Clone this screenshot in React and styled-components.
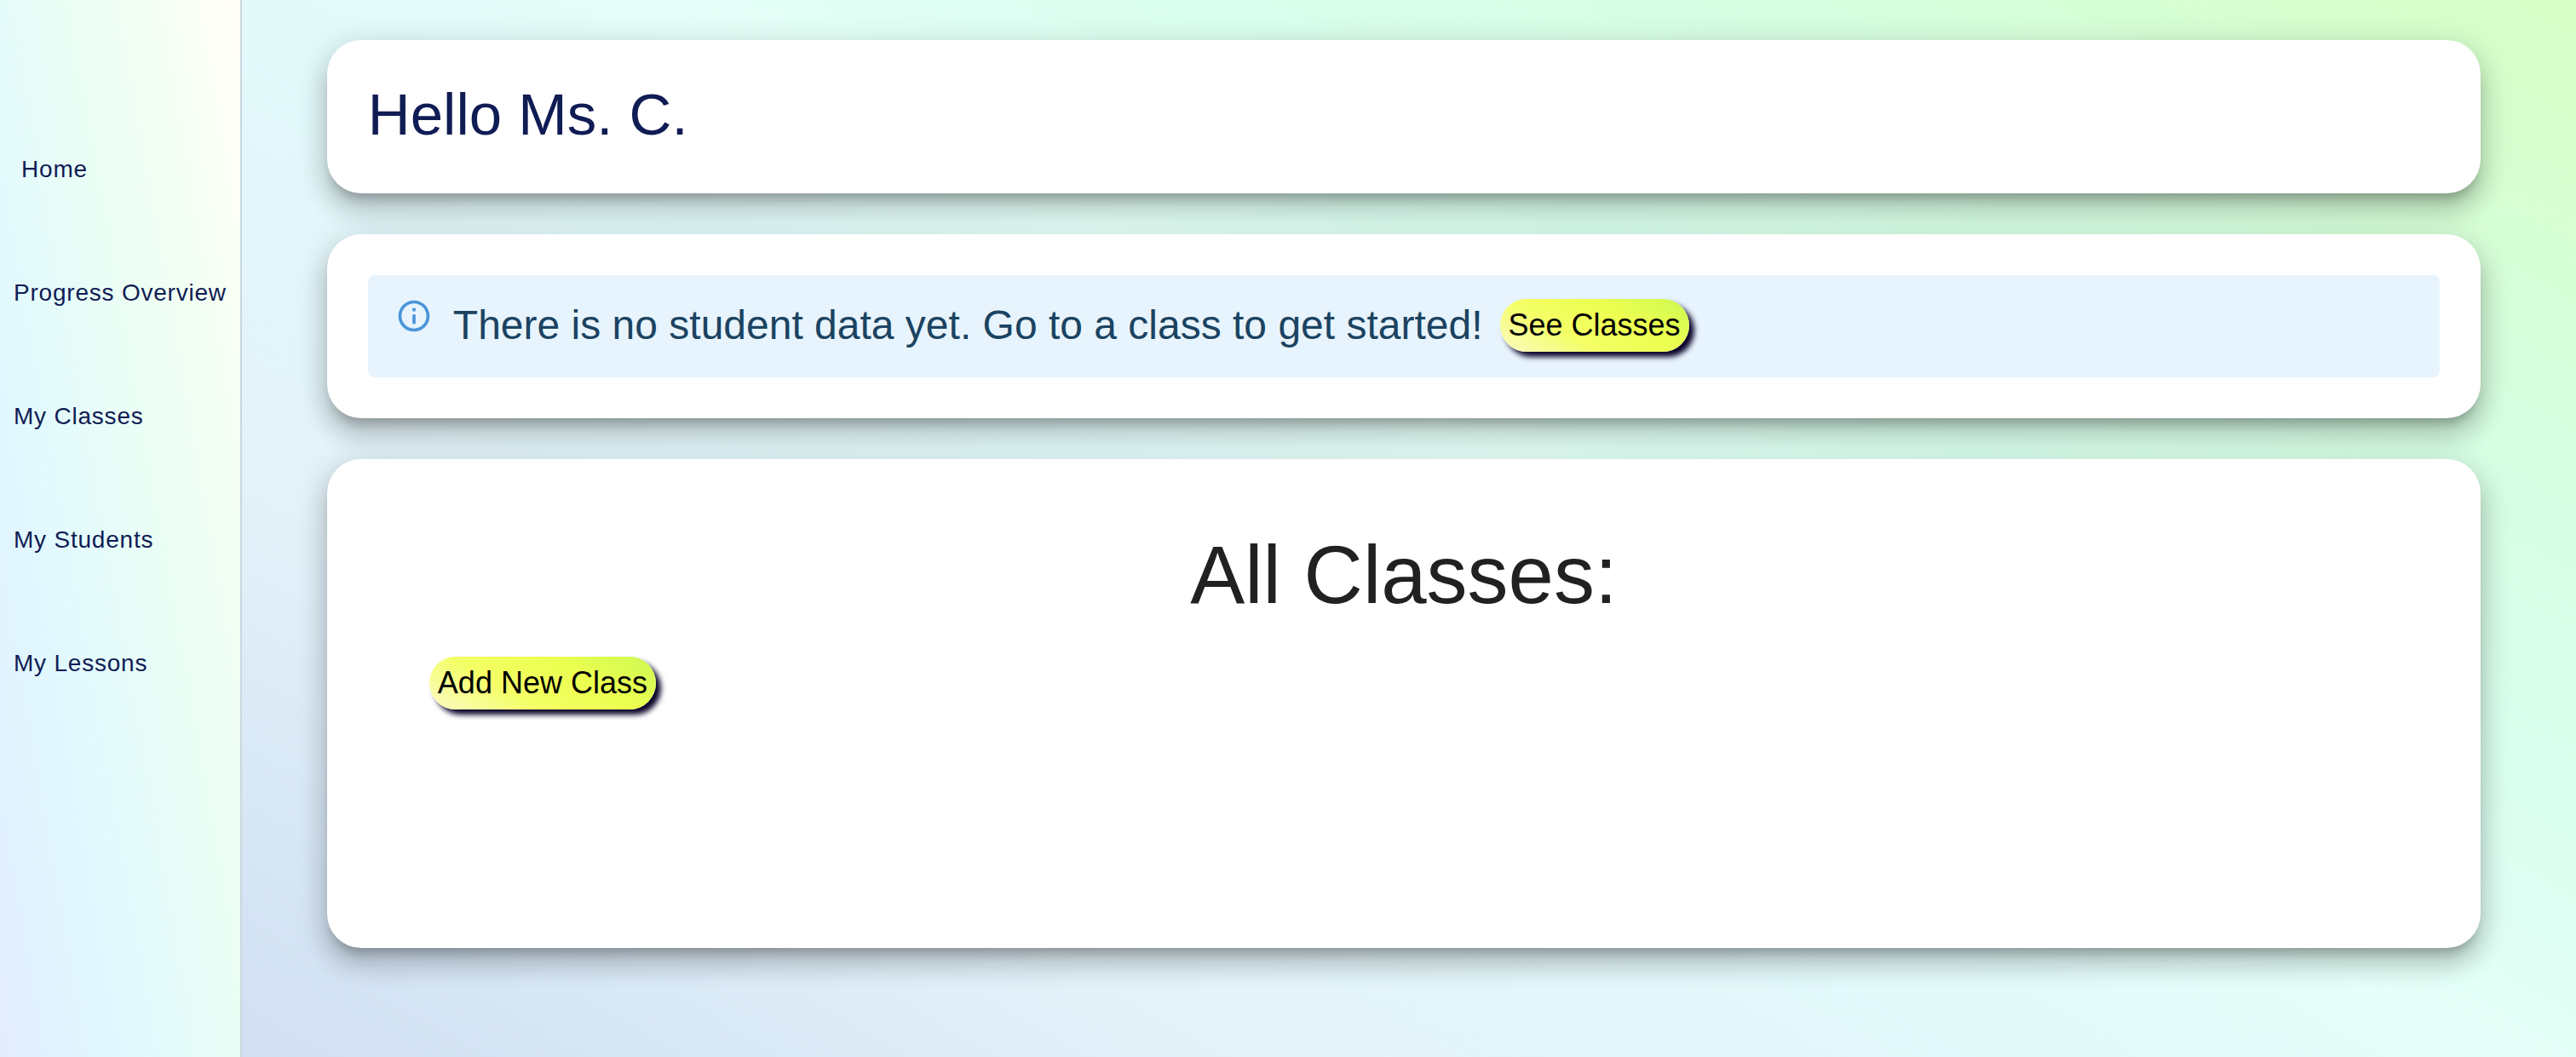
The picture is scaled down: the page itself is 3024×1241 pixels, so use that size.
import React from "react";
import styled, { createGlobalStyle } from "styled-components";

const GlobalStyle = createGlobalStyle`
  *, *::before, *::after { box-sizing: border-box; }
  body {
    margin: 0;
    font-family: "Liberation Sans", Helvetica, Arial, sans-serif;
    color: #212121;
  }
`;

const Page = styled.div`
  display: flex;
  min-height: 100vh;
`;

const Sidebar = styled.nav`
  flex: none;
  padding-top: 162px;
  border-right: 2px solid #c8d7de;
  background: linear-gradient(
    80deg,
    #e3ecfe,
    #e0f3ff 16%,
    #e2f9fe 33%,
    #e6fcfa 45%,
    #eafef5 58%,
    #f3fff3 78%,
    #fffff7 96%
  );
`;

const NavList = styled.ul`
  display: flex;
  flex-direction: column;
  align-items: flex-start;
  gap: 72px;
  margin: 0;
  padding: 0;
  list-style: none;
`;

const NavLink = styled.a`
  display: block;
  min-width: 128px;
  padding: 12px 16px;
  color: #101c54;
  font-size: 28px;
  line-height: 49px;
  letter-spacing: 0.028em;
  text-align: center;
  text-decoration: none;
  white-space: nowrap;
`;

const Main = styled.main`
  flex: 1;
  display: flex;
  flex-direction: column;
  gap: 48px;
  padding: 47px 112px 48px 100px;
  background: linear-gradient(
    30deg,
    #d1dff2,
    #d6e6f5 9%,
    #e3f2f9 24%,
    #e3fafb 45%,
    #e5fff8 55%,
    #daffef 66%,
    #d6fee2 80%,
    #d6ffcd 94%,
    #d8ffc6
  );
`;

const Card = styled.section`
  padding: 48px;
  border-radius: 40px;
  background: #fff;
  box-shadow:
    0 12px 12px -6px rgba(0, 0, 0, 0.2),
    0 20px 28px 2px rgba(0, 0, 0, 0.14),
    0 8px 36px 6px rgba(0, 0, 0, 0.12);
`;

const ClassesCard = styled(Card)`
  min-height: 574px;
  padding: 80px 120px;
`;

const Greeting = styled.h1`
  margin: 0 0 4px;
  color: #101c54;
  font-size: 69px;
  font-weight: 400;
  line-height: 80px;
`;

const Alert = styled.div`
  display: flex;
  align-items: flex-start;
  gap: 24px;
  padding: 26px 32px;
  border-radius: 8px;
  background: #e7f4fd;
  color: #1b4361;
`;

const InfoIcon = styled.svg`
  flex: none;
  width: 44px;
  height: 44px;
  fill: #4a94d8;
`;

const AlertMessage = styled.div`
  display: flex;
  align-items: center;
  gap: 20px;
  padding: 2px 0 4px;
  font-size: 48px;
  line-height: 62px;
`;

const PillButton = styled.button`
  height: 62px;
  padding: 0 10px;
  border: 0;
  border-radius: 31px;
  background: linear-gradient(30deg, #fcfac8, #f4ff66 35%, #ecff50 65%, #cdf852);
  box-shadow: 6px 6px 6px #0b0329;
  color: #000;
  font-family: inherit;
  font-size: 36px;
  line-height: 62px;
  white-space: nowrap;
  cursor: pointer;
`;

const Heading = styled.h2`
  margin: 0 0 40px;
  font-size: 96px;
  font-weight: 400;
  line-height: 112px;
  text-align: center;
`;

const links = ["Home", "Progress Overview", "My Classes", "My Students", "My Lessons"];

export default function App() {
  return (
    <>
      <GlobalStyle />
      <Page>
        <Sidebar aria-label="Main">
          <NavList>
            {links.map((label) => (
              <li key={label}>
                <NavLink href={"#" + label.toLowerCase().replace(" ", "-")}>{label}</NavLink>
              </li>
            ))}
          </NavList>
        </Sidebar>
        <Main>
          <Card>
            <Greeting>Hello Ms. C.</Greeting>
          </Card>
          <Card>
            <Alert role="status">
              <InfoIcon viewBox="0 0 24 24" aria-hidden="true">
                <path d="M11 7h2v2h-2zM11 11h2v6h-2zM12 2C6.48 2 2 6.48 2 12s4.48 10 10 10 10-4.48 10-10S17.52 2 12 2zm0 18c-4.41 0-8-3.59-8-8s3.59-8 8-8 8 3.59 8 8-3.59 8-8 8z" />
              </InfoIcon>
              <AlertMessage>
                <span>There is no student data yet. Go to a class to get started!</span>
                <PillButton type="button">See Classes</PillButton>
              </AlertMessage>
            </Alert>
          </Card>
          <ClassesCard>
            <Heading>All Classes:</Heading>
            <PillButton type="button">Add New Class</PillButton>
          </ClassesCard>
        </Main>
      </Page>
    </>
  );
}
